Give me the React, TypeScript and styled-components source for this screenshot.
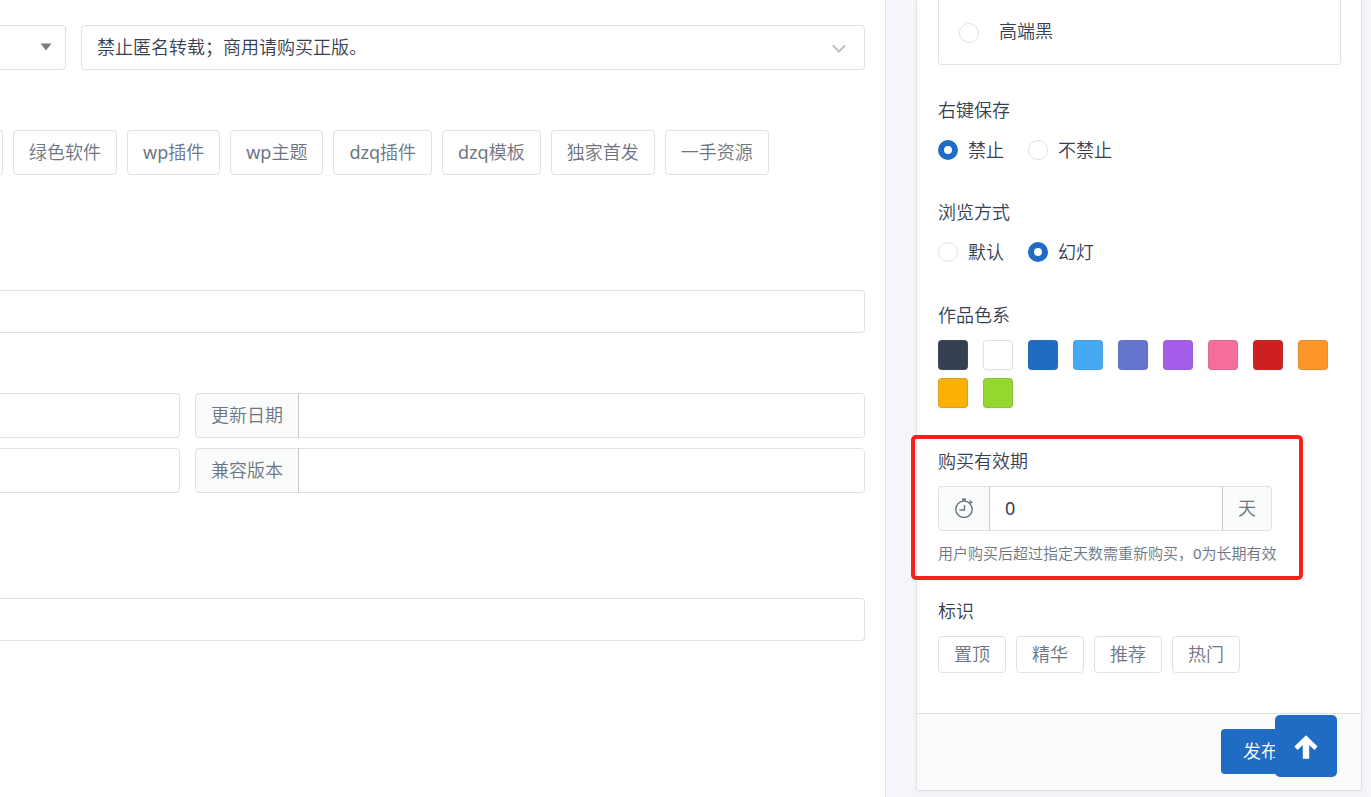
import React from "react";
import styled, { createGlobalStyle, css } from "styled-components";

const blue = "#206bc4";
const line = "#dfe1e3";
const ink = "#354052";
const muted = "#6e7582";

const GlobalStyle = createGlobalStyle`
  *, *::before, *::after { box-sizing: border-box; }
  body {
    margin: 0;
    background: #f4f6fb;
    color: ${ink};
    font-family: "Noto Sans", "Noto Sans CJK SC", sans-serif;
    font-size: 18px;
    font-weight: 350;
    line-height: 30px;
  }
  button, input, select { font: inherit; color: inherit; margin: 0; }
`;

const Page = styled.div`
  display: flex;
  align-items: stretch;
  gap: 30px;
  min-height: 100vh;
  padding-right: 9px;
`;

const Main = styled.main`
  flex: 1;
  min-width: 0;
  background: #fff;
  border-right: 1px solid ${line};
  padding: 25px 20px 60px 0;
`;

const Latin = styled.span`
  font-weight: 400;
`;

const Block = styled.section<{ $gap: number }>`
  margin-bottom: ${(p) => p.$gap}px;
`;

const SelectRow = styled(Block)`
  display: grid;
  grid-template-columns: 66px 1fr;
  gap: 15px;
`;

const SelectWrap = styled.div`
  position: relative;
`;

const openLeft = css`
  border-left: 0;
  border-top-left-radius: 0;
  border-bottom-left-radius: 0;
`;

const Select = styled.select<{ $open?: boolean }>`
  appearance: none;
  display: block;
  width: 100%;
  height: 45px;
  padding: 0 15px 2px;
  background: #fff;
  border: 1px solid ${line};
  border-radius: 4px;
  ${(p) => p.$open && openLeft}
`;

const SelectMark = styled.svg`
  position: absolute;
  right: 14px;
  top: 50%;
  transform: translateY(-50%);
  pointer-events: none;
`;

const TagRow = styled(Block)`
  display: flex;
  flex-wrap: wrap;
  gap: 10px;
`;

const Tag = styled.button<{ $small?: boolean }>`
  height: ${(p) => (p.$small ? 37 : 45)}px;
  padding: 0 15px 2px;
  background: #fff;
  border: 1px solid ${line};
  border-radius: 4px;
  color: ${muted};
`;

const TagEdge = styled(Tag)`
  width: 3px;
  padding: 0;
  ${openLeft}
`;

const TextInput = styled.input<{ $open?: boolean; $tall?: boolean }>`
  display: block;
  width: 100%;
  height: ${(p) => (p.$tall ? 45 : 43)}px;
  padding: 0 15px;
  background: #fff;
  border: 1px solid ${line};
  border-radius: 4px;
  ${(p) => p.$open && openLeft}
`;

const PairGrid = styled(Block)`
  display: grid;
  grid-template-columns: 180px 1fr;
  gap: 10px 15px;
`;

const Group = styled.div<{ $width?: number }>`
  display: flex;
  height: 45px;
  max-width: ${(p) => (p.$width ? `${p.$width}px` : "none")};
  border: 1px solid ${line};
  border-radius: 4px;
`;

const Addon = styled.label<{ $end?: boolean }>`
  display: flex;
  align-items: center;
  padding: 0 15px 2px;
  margin: -1px 0;
  background: #fafcfb;
  background-clip: padding-box;
  border: solid ${line};
  border-width: 1px 0;
  color: ${muted};
  ${(p) =>
    p.$end
      ? css`border-left: 1px solid #c5c8cc; border-radius: 0 4px 4px 0;`
      : css`border-right: 1px solid #c5c8cc; border-radius: 4px 0 0 4px;`}
`;

const GroupInput = styled.input`
  flex: 1;
  min-width: 0;
  padding: 0 15px 2px;
  border: 0;
  background: #fff;
  border-radius: 0 4px 4px 0;
  && { font-weight: 400; }
`;

const Panel = styled.aside`
  display: flex;
  flex-direction: column;
  align-self: flex-start;
  width: 446px;
  background: #fff;
  border: 1px solid ${line};
  border-top: 0;
  border-radius: 0 0 4px 4px;
  box-shadow: 0 2px 4px rgba(53, 64, 82, 0.05);
`;

const PanelBody = styled.div`
  display: flex;
  flex-direction: column;
  padding: 0 20px 40px 21px;
`;

const ThemeBox = styled.div`
  padding: 16px 20px 18px;
  margin-bottom: 30px;
  border: 1px solid ${line};
  border-top: 0;
  border-radius: 0 0 4px 4px;
`;

const Field = styled.fieldset<{ $gap: number }>`
  position: relative;
  min-width: 0;
  margin: 0 0 ${(p) => p.$gap}px;
  padding: 0;
  border: 0;
`;

const Title = styled.legend`
  display: block;
  padding: 0;
  margin-bottom: 10px;
`;

const RadioRow = styled.div`
  display: flex;
  gap: 24px;
`;

const RadioLabel = styled.label<{ $wide?: boolean }>`
  display: flex;
  align-items: center;
  gap: ${(p) => (p.$wide ? 20 : 10)}px;
`;

const Radio = styled.input<{ $low?: boolean }>`
  appearance: none;
  flex: none;
  width: 20px;
  height: 20px;
  border: 1px solid ${line};
  border-radius: 50%;
  background: #fff;
  ${(p) => p.$low && css`&& { margin-top: 4px; }`}
  &:checked {
    border: 6px solid ${blue};
  }
`;

const Swatches = styled.div`
  display: flex;
  flex-wrap: wrap;
  gap: 8px 15px;
`;

const Swatch = styled.input<{ $color: string }>`
  appearance: none;
  width: 30px;
  height: 30px;
  background: ${(p) => p.$color};
  border: 1px solid rgba(101, 109, 119, 0.2);
  border-radius: 4px;
  box-shadow: 0 1px 2px rgba(53, 64, 82, 0.05);
`;

const Hint = styled.p`
  margin: 10px 0 0;
  font-size: 15px;
  line-height: 24px;
  color: ${muted};
  white-space: nowrap;
`;

const Highlight = styled.div`
  position: absolute;
  inset: -51px 38px -15px -27px;
  border: 4px solid #f5221b;
  border-radius: 5px;
  pointer-events: none;
`;

const PanelFooter = styled.footer`
  display: flex;
  justify-content: flex-end;
  padding: 15px 60px 16px;
  background: #fafcfb;
  border-top: 1px solid ${line};
  border-radius: 0 0 4px 4px;
`;

const Publish = styled.button`
  height: 45px;
  padding: 0 22px 2px;
  background: ${blue};
  color: #fff;
  border: 0;
  border-radius: 4px;
`;

const ToTop = styled.button`
  position: fixed;
  right: 34px;
  bottom: 20px;
  display: grid;
  place-items: center;
  width: 62px;
  height: 62px;
  padding: 2px 0 0;
  background: ${blue};
  color: #fff;
  border: 0;
  border-radius: 5px;
`;

const tags = [
  { latin: "", text: "绿色软件" },
  { latin: "wp", text: "插件" },
  { latin: "wp", text: "主题" },
  { latin: "dzq", text: "插件" },
  { latin: "dzq", text: "模板" },
  { latin: "", text: "独家首发" },
  { latin: "", text: "一手资源" },
];
const flags = ["置顶", "精华", "推荐", "热门"];
const colors = [
  "#354052", "#ffffff", "#206bc4", "#45aaf2", "#6574cd", "#a55eea",
  "#f66d9b", "#cd201f", "#fd9629", "#fab005", "#94d82d",
];

function StopwatchIcon() {
  return (
    <svg width="20" height="20" viewBox="0 0 20 20" fill="none" stroke="currentColor" strokeWidth="1.4" aria-hidden="true">
      <circle cx="10" cy="11.2" r="8.2" />
      <path d="M10.5 7v5H5.4" />
      <path d="M8 1.4h4" strokeWidth="2" />
      <path d="M10 1v2.4M15.2 5.6l2-2M15.8 2.6l2.4 2.4" />
    </svg>
  );
}

export default function App() {
  return (
    <>
      <GlobalStyle />
      <Page>
        <Main>
          <SelectRow $gap={60}>
            <SelectWrap>
              <Select $open aria-label="版权类型"><option value="" /></Select>
              <SelectMark width="12" height="10" viewBox="0 0 12 10" aria-hidden="true">
                <path d="M0.5 0.5h11L6 7.5z" fill="#7d7d7d" />
              </SelectMark>
            </SelectWrap>
            <SelectWrap>
              <Select aria-label="版权说明"><option>禁止匿名转载；商用请购买正版。</option></Select>
              <SelectMark width="24" height="24" viewBox="0 0 24 24" aria-hidden="true">
                <path d="M6 9.5l6 6 6-6" fill="none" stroke="#bcbfc3" strokeWidth="2" />
              </SelectMark>
            </SelectWrap>
          </SelectRow>

          <TagRow $gap={115}>
            <TagEdge type="button" aria-label="标签" />
            {tags.map((t) => (
              <Tag type="button" key={t.latin + t.text}>
                {t.latin && <Latin>{t.latin}</Latin>}
                {t.text}
              </Tag>
            ))}
          </TagRow>

          <Block $gap={60}>
            <TextInput $open aria-label="链接" />
          </Block>

          <PairGrid $gap={105}>
            <TextInput $open $tall aria-label="属性一" />
            <Group>
              <Addon htmlFor="updated">更新日期</Addon>
              <GroupInput id="updated" />
            </Group>
            <TextInput $open $tall aria-label="属性二" />
            <Group>
              <Addon htmlFor="compat">兼容版本</Addon>
              <GroupInput id="compat" />
            </Group>
          </PairGrid>

          <TextInput $open aria-label="备注" />
        </Main>

        <Panel>
          <PanelBody>
            <ThemeBox>
              <RadioLabel $wide>
                <Radio $low type="radio" name="theme" />
                高端黑
              </RadioLabel>
            </ThemeBox>

            <Field $gap={32}>
              <Title>右键保存</Title>
              <RadioRow>
                <RadioLabel><Radio type="radio" name="save" defaultChecked />禁止</RadioLabel>
                <RadioLabel><Radio type="radio" name="save" />不禁止</RadioLabel>
              </RadioRow>
            </Field>

            <Field $gap={33}>
              <Title>浏览方式</Title>
              <RadioRow>
                <RadioLabel><Radio type="radio" name="view" />默认</RadioLabel>
                <RadioLabel><Radio type="radio" name="view" defaultChecked />幻灯</RadioLabel>
              </RadioRow>
            </Field>

            <Field $gap={38}>
              <Title>作品色系</Title>
              <Swatches>
                {colors.map((c) => (
                  <Swatch key={c} type="radio" name="color" value={c} aria-label={c} $color={c} />
                ))}
              </Swatches>
            </Field>

            <Field $gap={31}>
              <Title>购买有效期</Title>
              <Group $width={334}>
                <Addon htmlFor="days" aria-label="购买有效期"><StopwatchIcon /></Addon>
                <GroupInput id="days" defaultValue="0" />
                <Addon htmlFor="days" $end>天</Addon>
              </Group>
              <Hint>用户购买后超过指定天数需重新购买，<Latin>0</Latin>为长期有效</Hint>
              <Highlight />
            </Field>

            <Field $gap={0}>
              <Title>标识</Title>
              <TagRow $gap={0}>
                {flags.map((f) => <Tag type="button" $small key={f}>{f}</Tag>)}
              </TagRow>
            </Field>
          </PanelBody>
          <PanelFooter>
            <Publish type="button">发布</Publish>
          </PanelFooter>
        </Panel>
      </Page>
      <ToTop type="button" aria-label="返回顶部">
        <svg width="24" height="24" viewBox="0 0 24 24" fill="currentColor" aria-hidden="true">
          <path d="M12 0.3L23.6 11.6l-3.2 3.3-5.2-5V23.7H8.8V9.9l-5.2 5-3.2-3.3z" />
        </svg>
      </ToTop>
    </>
  );
}
